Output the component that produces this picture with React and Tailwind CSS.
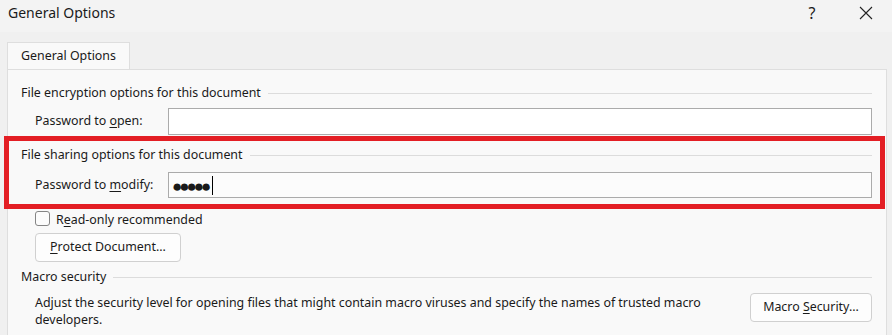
import React from 'react';

const font = { fontFamily: '"Segoe UI", "Noto Sans", sans-serif' };

function Group({ title, pr = 'pr-[14px]' }) {
  return (
    <div className={`flex items-center h-[18px] ${pr}`}>
      <span className="text-[#1a1a1a]">{title}</span>
      <div className="flex-1 h-px bg-[#dcdcdc] ml-[7px]" />
    </div>
  );
}

function Key({ children }) {
  return <span className="underline underline-offset-2 decoration-1">{children}</span>;
}

export default function App() {
  return (
    <div className="w-[892px] h-[335px] bg-[#f0f0f0] overflow-hidden text-[12.4px] text-[#1a1a1a]" style={font}>
      {/* title bar */}
      <div className="h-[32px] bg-[#f3f3f3] flex items-center pl-[8px] pb-[7px]">
        <span className="text-[14px] flex-1">General Options</span>
        <span className="text-[16px] w-[20px] text-center mr-[36px]">?</span>
        <svg width="16" height="16" viewBox="0 0 16 16" className="mr-[18px]">
          <path d="M2 2l12 12M14 2L2 14" stroke="#222" strokeWidth="1.1" />
        </svg>
      </div>

      {/* tab */}
      <div className="pl-[7px] pt-[9px]">
        <div className="w-[123px] h-[28px] bg-[#f9f9f9] border border-b-0 border-[#dedede] flex items-center pl-[13px] relative top-px">
          General Options
        </div>
      </div>

      {/* panel */}
      <div className="ml-[7px] w-[880px] bg-[#f9f9f9] border border-[#dedede] h-[300px] relative">
        <div className="pl-[13px] pt-[14px]">
          <Group title="File encryption options for this document" />
          <div className="flex items-center mt-[6px] pl-[14px] pr-[14px]">
            <span className="w-[133px]">Password to <Key>o</Key>pen:</span>
            <div className="flex-1 h-[27px] bg-white border border-[#ababab]" />
          </div>
        </div>

        {/* highlighted block */}
        <div className="ml-[-4px] mr-[1px] mt-px border-[5px] border-[#e31e24] h-[73px] pl-[12px] pt-[5px]">
          <Group title="File sharing options for this document" pr="pr-[8px]" />
          <div className="flex items-center mt-[8px] pl-[14px] pr-[8px]">
            <span className="w-[133px]">Password to <Key>m</Key>odify:</span>
            <div className="flex-1 h-[26px] bg-[#fcfcfc] border border-[#ababab] flex items-center pl-[3px]">
              <span className="text-[17px] tracking-[-3px] leading-none">●●●●●</span>
              <span className="w-px h-[19px] bg-black ml-[4px]" />
            </div>
          </div>
        </div>

        <div className="pl-[27px] pt-px">
          <label className="flex items-center h-[16px]">
            <span className="w-[15px] h-[15px] border border-[#858585] rounded-[3px] bg-[#fcfcfc]" />
            <span className="ml-[6px] relative top-[2px]">R<Key>e</Key>ad-only recommended</span>
          </label>
          <div className="mt-[7px] w-[146px] h-[29px] bg-[#fdfdfd] border border-[#d0d0d0] rounded-[4px] flex items-center justify-center">
            <span><Key>P</Key>rotect Document...</span>
          </div>
        </div>

        <div className="pl-[13px] mt-[6px]">
          <Group title="Macro security" />
          <div className="flex items-start pl-[14px] pr-[14px] mt-[8px]">
            <p className="w-[700px] leading-[17px]">
              Adjust the security level for opening files that might contain macro viruses and specify the names of trusted macro developers.
            </p>
            <div className="ml-auto mt-[-1px] w-[122px] h-[29px] bg-[#fdfdfd] border border-[#d0d0d0] rounded-[4px] flex items-center justify-center">
              <span>Macro <Key>S</Key>ecurity...</span>
            </div>
          </div>
        </div>
      </div>
    </div>
  );
}
